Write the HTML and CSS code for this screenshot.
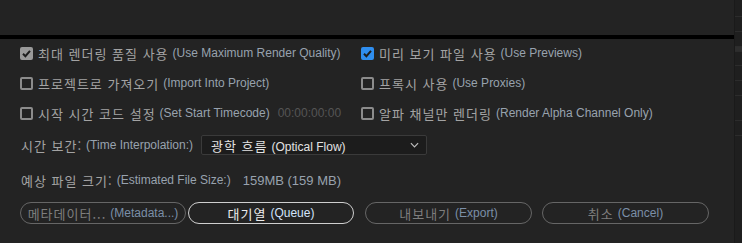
FILE: index.html
```html
<!DOCTYPE html>
<html lang="ko">
<head>
    <meta charset="UTF-8">
    <title>내보내기 설정</title>
    <link rel="stylesheet" href="styles.css">
</head>
<body>
    <div class="main">
        <div class="top-band"></div>
        <div class="rule"></div>

        <div class="options">
            <label class="opt">
                <span class="box checked-grey"><svg viewBox="0 0 13 13"><path d="M3 6.8 L5.4 9.2 L10 3.8" /></svg></span>
                <span class="ko">최대 렌더링 품질 사용</span><span class="en">(Use Maximum Render Quality)</span>
            </label>
            <label class="opt">
                <span class="box checked-blue"><svg viewBox="0 0 13 13"><path d="M3 6.8 L5.4 9.2 L10 3.8" /></svg></span>
                <span class="ko">미리 보기 파일 사용</span><span class="en">(Use Previews)</span>
            </label>
            <label class="opt">
                <span class="box"></span>
                <span class="ko">프로젝트로 가져오기</span><span class="en">(Import Into Project)</span>
            </label>
            <label class="opt">
                <span class="box"></span>
                <span class="ko">프록시 사용</span><span class="en">(Use Proxies)</span>
            </label>
            <label class="opt">
                <span class="box"></span>
                <span class="ko">시작 시간 코드 설정</span><span class="en">(Set Start Timecode)</span>
                <span class="timecode">00:00:00:00</span>
            </label>
            <label class="opt">
                <span class="box"></span>
                <span class="ko">알파 채널만 렌더링</span><span class="en">(Render Alpha Channel Only)</span>
            </label>
        </div>

        <div class="field-row interp">
            <span class="ko">시간 보간:</span><span class="en">(Time Interpolation:)</span>
            <div class="select">
                <span class="select-text"><span class="ko">광학 흐름</span><span class="en">(Optical Flow)</span></span>
                <svg class="chevron" viewBox="0 0 10 6"><path d="M1 1 L5 5 L9 1" /></svg>
            </div>
        </div>

        <div class="field-row size">
            <span class="ko">예상 파일 크기:</span><span class="en">(Estimated File Size:)</span>
            <span class="size-value">159MB (159 MB)</span>
        </div>

        <div class="buttons">
            <button class="btn"><span class="ko">메타데이터...</span><span class="en">(Metadata...)</span></button>
            <button class="btn primary"><span class="ko">대기열</span><span class="en">(Queue)</span></button>
            <button class="btn export"><span class="ko">내보내기</span><span class="en">(Export)</span></button>
            <button class="btn cancel"><span class="ko">취소</span><span class="en">(Cancel)</span></button>
        </div>
    </div>

    <div class="side">
        <div class="tick" style="height: 17px"></div>
        <div class="tick" style="height: 15px"></div>
        <div class="tick" style="height: 15px"></div>
        <div class="tick light" style="height: 5px"></div>
        <div class="tick" style="height: 14px"></div>
        <div class="tick" style="height: 15px"></div>
        <div class="tick" style="height: 15px"></div>
        <div class="tick" style="height: 25px"></div>
        <div class="tick" style="height: 15px"></div>
    </div>
</body>
</html>
```

FILE: styles.css
```css
* {
    box-sizing: border-box;
    margin: 0;
    padding: 0;
}

body {
    width: 742px;
    height: 243px;
    overflow: hidden;
    background-color: #232323;
    font-family: "Liberation Sans", "Noto Sans CJK KR", Arial, sans-serif;
    font-size: 13px;
    color: #a6a6a6;
    display: flex;
}

.main {
    width: 734px;
    display: flex;
    flex-direction: column;
}

.top-band {
    height: 35px;
    background: #232323;
}

.rule {
    height: 4px;
    background: #000;
}

.ko {
    font-family: "Noto Sans CJK KR", sans-serif;
    font-size: 13px;
    letter-spacing: 1px;
    color: #a3a3a3;
}

.en {
    font-family: "Liberation Sans", Arial, sans-serif;
    font-size: 12px;
    color: #98a2ae;
    margin-left: 4px;
}

/* checkbox options */
.options {
    display: grid;
    grid-template-columns: 341px 1fr;
    grid-auto-rows: 30px;
    padding-left: 20px;
    margin-top: -1px;
}

.opt {
    display: flex;
    align-items: center;
    white-space: pre;
}

.box {
    width: 13px;
    height: 13px;
    border: 2px solid #8c8c8c;
    border-radius: 2px;
    margin-right: 5px;
    flex-shrink: 0;
    display: flex;
}

.box svg {
    width: 13px;
    height: 13px;
    margin: -2px;
}

.box path {
    fill: none;
    stroke: #1d1d1d;
    stroke-width: 2;
}

.checked-grey {
    background: #9a9a9a;
    border-color: #9a9a9a;
}

.checked-blue {
    background: #2f8ef0;
    border-color: #2f8ef0;
}

.timecode {
    margin-left: 8px;
    font-size: 12px;
    color: #555;
}

/* fields */
.field-row {
    display: flex;
    align-items: center;
    padding-left: 21px;
    white-space: pre;
}

.interp {
    height: 34px;
}

.size {
    height: 36px;
}

.select {
    width: 226px;
    height: 20px;
    margin-left: 8px;
    background: #1c1c1c;
    border: 1px solid #3a3a3a;
    border-radius: 2px;
    display: flex;
    align-items: center;
    justify-content: space-between;
    padding: 0 7px 0 9px;
}

.select .ko,
.select .en {
    color: #e2e2e2;
}

.chevron {
    width: 9px;
    height: 6px;
}

.chevron path {
    fill: none;
    stroke: #bdbdbd;
    stroke-width: 1.3;
}

.size-value {
    margin-left: 12px;
    font-size: 13px;
    color: #98a2ae;
}

/* buttons */
.buttons {
    display: flex;
    padding-left: 20px;
    margin-top: 4px;
}

.btn {
    width: 166px;
    height: 22px;
    border: 1.5px solid #666;
    border-radius: 11px;
    background: transparent;
    white-space: pre;
    display: flex;
    align-items: center;
    justify-content: center;
    cursor: pointer;
}

.btn .ko {
    color: #7e7e7e;
}

.btn .en {
    color: #7b8fa8;
}

.btn.primary {
    margin-left: 2px;
    border-color: #cfcfcf;
}

.btn.primary .ko {
    color: #ececec;
}

.btn.primary .en {
    color: #d3e4fb;
}

.btn.export {
    margin-left: 11px;
    width: 167px;
}

.btn.cancel {
    margin-left: 10px;
    width: 167px;
}

/* right edge strip */
.side {
    flex: 1;
    background: #1f1f1f;
    border-left: 1px solid #1a1a1a;
}

.tick {
    border-bottom: 1px solid #2c2c2c;
}

.tick.light {
    background: #2e2e2e;
}
```
